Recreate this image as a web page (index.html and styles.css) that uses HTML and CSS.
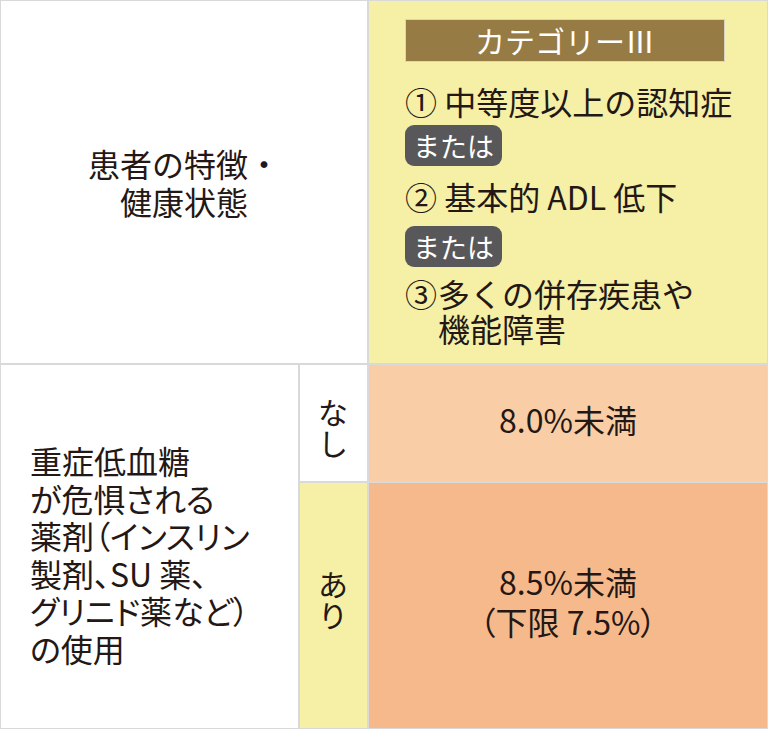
FILE: index.html
```html
<!DOCTYPE html>
<html lang="ja">
<head>
<meta charset="utf-8">
<title>カテゴリーⅢ</title>
<link rel="stylesheet" href="styles.css">
</head>
<body>
<div class="table">
  <div class="cell head-left">
    <p class="center-text">患者の特徴・<br>健康状態</p>
  </div>
  <div class="cell head-right">
    <div class="cat">カテゴリーⅢ</div>
    <div class="item item-1">① 中等度以上の認知症</div>
    <div class="badge badge-1">または</div>
    <div class="item item-2">② 基本的 ADL 低下</div>
    <div class="badge badge-2">または</div>
    <div class="item item-3"><span class="num">③</span><span>多くの併存疾患や<br>機能障害</span></div>
  </div>
  <div class="cell drug">
    <p class="drug-text">重症低血糖<br>が危惧される<br>薬剤（インスリン<br>製剤、SU 薬、<br>グリニド薬など）<br>の使用</p>
  </div>
  <div class="cell sub sub-none"><span class="stack">なし</span></div>
  <div class="cell value value-none">8.0%未満</div>
  <div class="cell sub sub-yes"><span class="stack">あり</span></div>
  <div class="cell value value-yes">8.5%未満<br>（下限 7.5%）</div>
</div>
</body>
</html>
```

FILE: styles.css
```css
html, body {
  margin: 0;
  padding: 0;
  background: #ffffff;
}

body {
  font-family: "Noto Sans CJK JP", "Noto Sans", sans-serif;
  color: #231815;
}

.table {
  width: 768px;
  height: 729px;
  box-sizing: border-box;
  padding: 1px;
  background: #d9d9d9;
  display: grid;
  grid-template-columns: 297px 67px 398px;
  grid-template-rows: 362px 116px 245px;
  gap: 2px;
}

.cell {
  background: #ffffff;
  display: flex;
  box-sizing: border-box;
}

.head-left {
  grid-column: 1 / 3;
  grid-row: 1;
  align-items: center;
  justify-content: center;
}

.center-text {
  margin: 0;
  font-size: 32px;
  line-height: 38px;
  text-align: center;
}

.head-right {
  grid-column: 3;
  grid-row: 1;
  background: #f6efa6;
  flex-direction: column;
  align-items: flex-start;
  padding: 18px 0 0 36px;
}

.cat {
  width: 320px;
  height: 43px;
  box-sizing: border-box;
  border: 1px solid #d8d4c4;
  background: #967b45;
  color: #ffffff;
  font-size: 30px;
  line-height: 41px;
  text-align: center;
}

.item {
  font-size: 32px;
  line-height: 35px;
  white-space: nowrap;
}

.item-1 { margin-top: 22px; }
.item-2 { margin-top: 13px; }
.item-3 {
  margin-top: 9px;
  display: flex;
}

.num {
  width: 33px;
  flex: none;
}

.badge {
  height: 41px;
  box-sizing: border-box;
  padding: 0 8px;
  background: #58585a;
  color: #ffffff;
  border-radius: 9px;
  font-size: 27px;
  line-height: 41px;
}

.badge-1 { margin-top: 6px; }
.badge-2 { margin-top: 12px; }

.drug {
  grid-column: 1;
  grid-row: 2 / 4;
  align-items: center;
  padding: 16px 0 0 29px;
}

.drug-text {
  margin: 0;
  font-size: 32px;
  line-height: 37.5px;
  font-feature-settings: "palt";
}

.sub {
  grid-column: 2;
  align-items: center;
  justify-content: center;
}

.stack {
  display: block;
  width: 30px;
  font-size: 30px;
  line-height: 31px;
  word-break: break-all;
  text-align: center;
}

.sub-none {
  grid-row: 2;
  padding: 8px 1px 0 0;
}

.sub-yes {
  grid-row: 3;
  background: #f6efa6;
  padding: 0 1px 14px 0;
}

.value {
  grid-column: 3;
  align-items: center;
  justify-content: center;
  text-align: center;
  font-size: 32px;
  line-height: 40px;
  font-feature-settings: "palt";
}

.value-none {
  grid-row: 2;
  background: #f9cda6;
  padding-bottom: 8px;
}

.value-yes {
  grid-row: 3;
  background: #f6b98b;
  padding-bottom: 10px;
}
```
